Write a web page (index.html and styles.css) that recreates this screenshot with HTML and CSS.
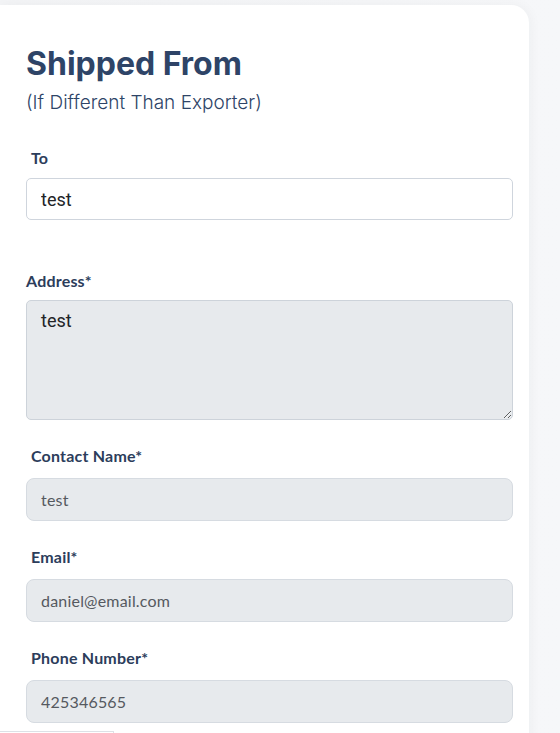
FILE: index.html
```html
<!DOCTYPE html>
<html lang="en">
<head>
<meta charset="utf-8">
<title>Shipped From</title>
<link rel="stylesheet" href="styles.css">
</head>
<body>
<div class="page">
  <section class="card">
    <h1 class="title">Shipped From</h1>
    <p class="subtitle">(If Different Than Exporter)</p>

    <div class="field field-to">
      <label class="label label-indent">To</label>
      <input class="input input-plain" type="text" value="test">
    </div>

    <div class="field field-address">
      <label class="label label-address">Address*</label>
      <textarea class="textarea" readonly>test</textarea>
    </div>

    <div class="field">
      <label class="label label-indent label-filled">Contact Name*</label>
      <input class="input input-filled" type="text" value="test" readonly>
    </div>

    <div class="field">
      <label class="label label-indent label-filled">Email*</label>
      <input class="input input-filled" type="text" value="daniel@email.com" readonly>
    </div>

    <div class="field">
      <label class="label label-indent label-filled">Phone Number*</label>
      <input class="input input-filled" type="text" value="425346565" readonly>
    </div>
  </section>
</div>
<div class="corner-box"></div>
</body>
</html>
```

FILE: styles.css
```css
html, body {
  margin: 0;
  padding: 0;
  height: 100%;
  overflow: hidden;
}
body {
  background: linear-gradient(90deg, #f3f4f6 0%, #f6f7f9 100%);
}
.page {
  padding: 5px 31px 0 0;
}
.card {
  background: #ffffff;
  border-radius: 0 18px 0 0;
  padding: 39px 16px 40px 26px;
  box-shadow: 2px 0 12px rgba(30, 40, 60, 0.04);
  min-height: 900px;
}
.title {
  margin: 0;
  font-family: Inter, "Open Sans", sans-serif;
  font-weight: 700;
  font-size: 32px;
  line-height: 40px;
  color: #2e4467;
}
.subtitle {
  margin: 7px 0 0 0;
  font-family: Inter, "Open Sans", sans-serif;
  font-weight: 300;
  font-size: 19px;
  line-height: 24px;
  color: #2e4467;
}
.field {
  display: flex;
  flex-direction: column;
  margin-top: 26px;
}
.field-to {
  margin-top: 33px;
}
.field-address {
  margin-top: 51px;
}
.label {
  font-family: Lato, "Noto Sans", sans-serif;
  font-weight: 700;
  font-size: 16px;
  line-height: 20px;
  letter-spacing: 0.2px;
  color: #2c3d5b;
  margin-bottom: 10px;
}
.label-address {
  margin-bottom: 9px;
}
.label-filled {
  margin-bottom: 12px;
}
.label-indent {
  padding-left: 5px;
}
.input {
  box-sizing: border-box;
  width: 487px;
  margin: 0;
  outline: none;
}
.input-plain {
  height: 42px;
  border: 1px solid #cfd5dd;
  border-radius: 5px;
  background: #ffffff;
  padding: 0 14px;
  font-family: Roboto, "Liberation Sans", sans-serif;
  font-size: 18px;
  color: #222427;
}
.input-filled {
  height: 43px;
  border: 1px solid #d6dbe1;
  border-radius: 8px;
  background: #e7eaed;
  padding: 0 14px;
  font-family: Lato, "Noto Sans", sans-serif;
  font-size: 16px;
  letter-spacing: 0.2px;
  color: #55595f;
}
.textarea {
  box-sizing: border-box;
  width: 487px;
  height: 120px;
  margin: 0;
  border: 1px solid #cdd3da;
  border-radius: 5px;
  background: #e7eaed;
  padding: 9px 14px;
  font-family: Roboto, "Liberation Sans", sans-serif;
  font-size: 18px;
  line-height: 22px;
  color: #222427;
  resize: vertical;
  outline: none;
}
.corner-box {
  position: fixed;
  left: -1px;
  top: 731px;
  width: 113px;
  height: 30px;
  background: #ffffff;
  border: 1px solid #dde1e6;
}
```
